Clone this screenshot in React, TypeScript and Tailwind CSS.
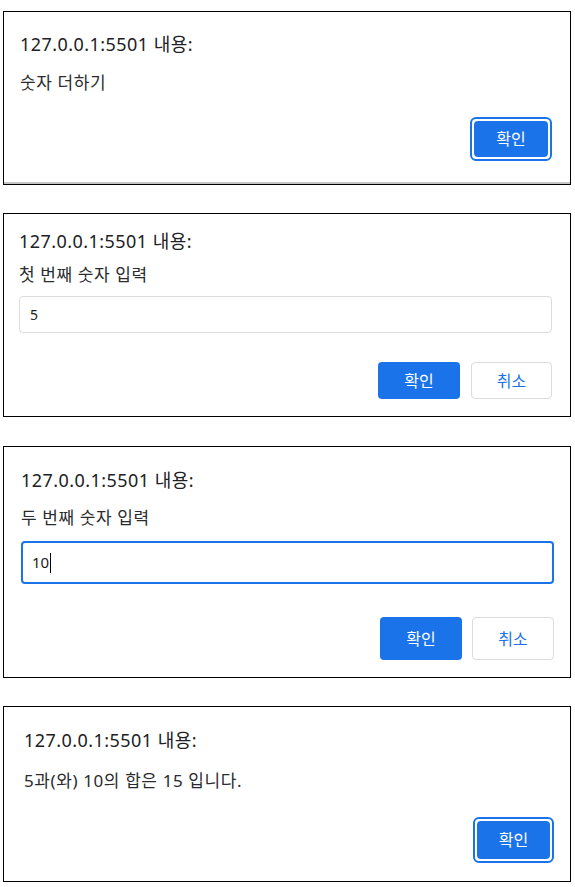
const font = { fontFamily: '"Noto Sans", "Noto Sans CJK KR", sans-serif' };

function Title({ className = '' }: { className?: string }) {
  return (
    <div className={`text-[18px] leading-[24px] tracking-[0.45px] text-[#202124] ${className}`}>127.0.0.1:5501 내용:</div>
  );
}

function Message({ children, className = '' }: { children: React.ReactNode; className?: string }) {
  return (
    <div className={`text-[17px] leading-[20px] tracking-[0.6px] text-[#2a2b2e] ${className}`}>{children}</div>
  );
}

function FocusButton({ className = '' }: { className?: string }) {
  return (
    <button className={`flex items-center justify-center rounded-[6px] border-2 border-[#1a73e8] bg-white p-[2px] ${className}`}>
      <span className="flex h-full w-full items-center justify-center rounded-[4px] bg-[#1a73e8] text-[16px] text-white">확인</span>
    </button>
  );
}

function OkButton({ className = '' }: { className?: string }) {
  return (
    <button className={`flex items-center justify-center rounded-[4px] bg-[#1a73e8] text-[16px] text-white ${className}`}>확인</button>
  );
}

function CancelButton({ className = '' }: { className?: string }) {
  return (
    <button className={`flex items-center justify-center rounded-[4px] border border-[#dadce0] bg-white text-[16px] text-[#1a73e8] ${className}`}>취소</button>
  );
}

export default function App() {
  return (
    <div className="flex min-h-screen w-[575px] flex-col bg-white pt-[11px]" style={font}>
      {/* 1: alert */}
      <div className="ml-[3px] flex h-[174px] w-[568px] flex-col border border-black">
        <div className="flex flex-1 flex-col pl-[16px] pr-[18px] pt-[20px]">
          <Title />
          <Message className="mt-[17px]">숫자 더하기</Message>
          <div className="mt-[24px] flex justify-end">
            <FocusButton className="h-[44px] w-[82px]" />
          </div>
        </div>
        <div className="h-[2px] bg-[#c6c6c6]" />
      </div>

      {/* 2: prompt */}
      <div className="ml-[3px] mt-[28px] flex h-[204px] w-[568px] flex-col border border-black pl-[15px] pr-[18px] pt-[15px]">
        <Title />
        <Message className="mt-[12px]">첫 번째 숫자 입력</Message>
        <div className="mt-[11px] flex h-[37px] items-center rounded-[4px] border border-[#dadce0] px-[10px] text-[14px] text-[#202124]">5</div>
        <div className="mt-[29px] flex justify-end gap-[11px]">
          <OkButton className="h-[37px] w-[82px]" />
          <CancelButton className="h-[37px] w-[81px]" />
        </div>
      </div>

      {/* 3: prompt focused */}
      <div className="ml-[3px] mt-[29px] flex h-[232px] w-[568px] flex-col border border-black pl-[17px] pr-[16px] pt-[21px]">
        <Title />
        <Message className="mt-[16px]">두 번째 숫자 입력</Message>
        <div className="mt-[13px] flex h-[43px] items-center rounded-[4px] border-2 border-[#1a73e8] px-[9px] text-[15px] text-[#202124]">
          10<span className="ml-[1px] inline-block h-[20px] w-[1px] bg-black" />
        </div>
        <div className="mt-[33px] flex justify-end gap-[10px]">
          <OkButton className="h-[43px] w-[82px]" />
          <CancelButton className="h-[43px] w-[82px]" />
        </div>
      </div>

      {/* 4: result */}
      <div className="ml-[3px] mt-[28px] flex h-[176px] w-[568px] flex-col border border-black pl-[20px] pr-[16px] pt-[21px]">
        <Title />
        <Message className="mt-[19px]">5과(와) 10의 합은 15 입니다.</Message>
        <div className="mt-[26px] flex justify-end">
          <FocusButton className="h-[46px] w-[81px]" />
        </div>
      </div>
    </div>
  );
}
